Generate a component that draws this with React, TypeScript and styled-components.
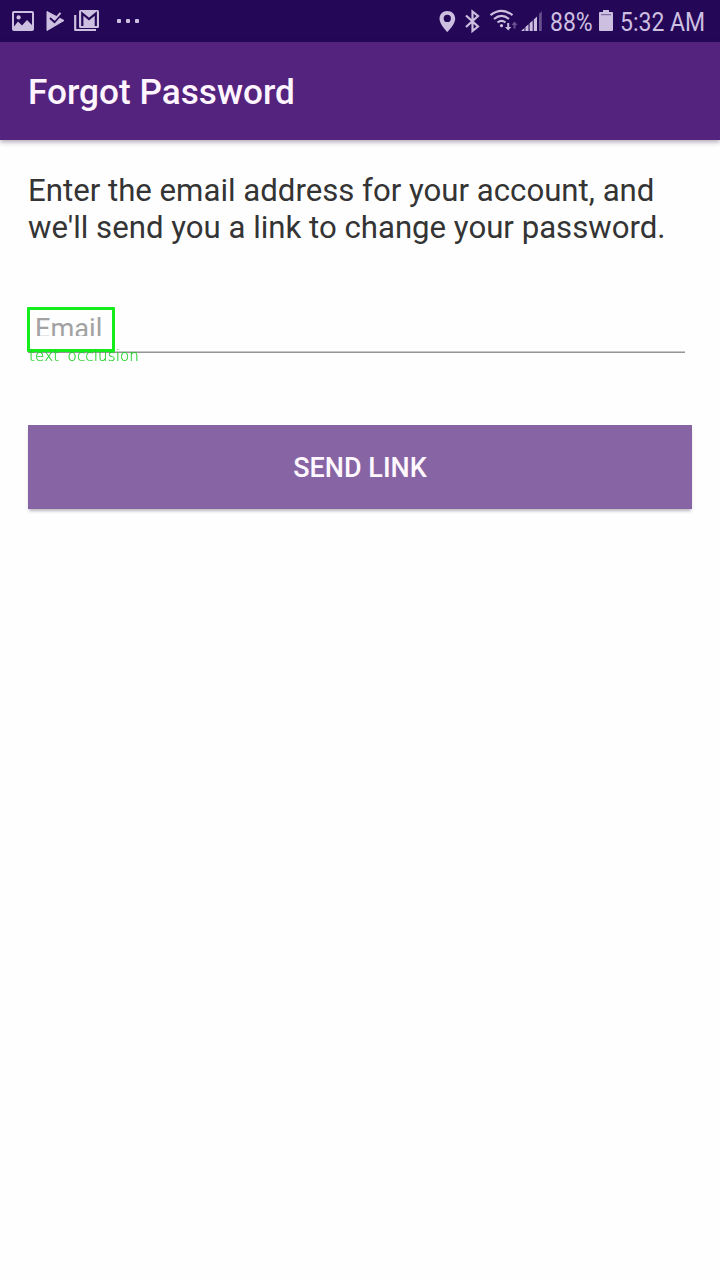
import React from 'react';
import styled, { createGlobalStyle } from 'styled-components';

const GlobalStyle = createGlobalStyle`
  * { box-sizing: border-box; }
  body { margin: 0; background: #fefefe; font-family: Roboto, sans-serif; }
`;

const Screen = styled.div`
  width: 720px;
  height: 1280px;
  overflow: hidden;
  background: #fefefe;
`;

const StatusBar = styled.header`
  display: flex;
  justify-content: space-between;
  height: 42px;
  background: #250758;
  color: #cdbfe0;
`;

const StatusIcon = styled.svg`
  display: block;
  flex: none;
`;

const StatusText = styled.div<{ $width: number }>`
  width: ${(p) => p.$width}px;
  height: 42px;
  line-height: 44px;
  font-size: 26px;
  white-space: nowrap;

  span {
    display: inline-block;
    transform: scaleX(0.885);
    transform-origin: left center;
  }
`;

const StatusGroup = styled.div`
  display: flex;
`;

const AppBar = styled.div`
  position: relative;
  display: flex;
  align-items: center;
  height: 98px;
  padding: 2px 28px 0;
  background: #53237e;
  box-shadow: 0 2px 5px rgba(50, 30, 70, 0.4);
`;

const Title = styled.h1`
  margin: 0;
  color: #fff5ff;
  font-size: 35.2px;
  font-weight: 500;
  line-height: 42px;
  white-space: nowrap;
`;

const Form = styled.main`
  padding: 32px 28px 0;
`;

const Message = styled.p`
  margin: 0;
  color: #343434;
  font-size: 31.18px;
  line-height: 37px;
  white-space: nowrap;
`;

const Field = styled.div`
  position: relative;
  height: 108px;
  margin: 61px 0 10px;
`;

const Placeholder = styled.div`
  height: 29px;
  padding-left: 7px;
  overflow: hidden;
  color: #a2a2a2;
  font-size: 27.2px;
  line-height: 44px;
`;

const Underline = styled.div`
  height: 2px;
  margin: 15px 7px 0 0;
  border-top: 1px solid #c9c6c9;
  background: #979397;
`;

const Marker = styled.div`
  position: absolute;
  top: 0;
  left: -1px;
  width: 88px;
  height: 45px;
  border: 3px solid #15ec1c;
  border-radius: 1px;
`;

const MarkerLabel = styled.div`
  position: absolute;
  top: 40px;
  left: 1px;
  color: #1fd026;
  font-family: 'DejaVu Sans', sans-serif;
  font-size: 15px;
  font-weight: 200;
  letter-spacing: 0.15px;
  line-height: 18px;
  opacity: 0.99;
  white-space: nowrap;
  word-spacing: 3.5px;
  will-change: transform;
  -webkit-text-stroke: 0.2px #1fd026;
`;

const SendButton = styled.button`
  display: block;
  width: 664px;
  height: 84px;
  padding: 2px 0 0;
  border: 0;
  background: #8765a5;
  box-shadow: 0 3px 3px -1px rgba(60, 50, 70, 0.35);
  color: #fff8ff;
  font-family: Roboto, sans-serif;
  font-size: 27px;
  font-weight: 500;
`;

export default function App() {
  return (
    <Screen>
      <GlobalStyle />
      <StatusBar>
        <StatusIcon width="150" height="42" viewBox="0 0 150 42" fill="currentColor">
          <path fillRule="evenodd" d="M14 11H32Q34 11 34 13V29Q34 31 32 31H14Q12 31 12 29V13Q12 11 14 11ZM14 13V26.5L18 21.5L22 25.5L27 20L32 25V13Z" />
          <circle cx="18.6" cy="17.4" r="2.1" />
          <path d="M47 11.5L64 20.5L47 30.5Z" stroke="currentColor" strokeLinejoin="round" />
          <path d="M50 18L54.5 22L62.5 13" fill="none" stroke="#250758" strokeWidth="2" />
          <path d="M51.5 16.5L54.8 19.3L60.5 12.8" fill="none" stroke="currentColor" strokeWidth="2" />
          <path d="M75.2 15V30H96" fill="none" stroke="currentColor" strokeWidth="2.2" strokeLinejoin="round" />
          <rect x="79" y="10" width="20" height="18" rx="1.5" />
          <path d="M82.3 26V13.5L89 19L95.8 13.5V26" fill="none" stroke="#250758" strokeWidth="2.2" />
          <rect x="117" y="19" width="4" height="4" rx="1" />
          <rect x="126" y="19" width="4" height="4" rx="1" />
          <rect x="135" y="19" width="4" height="4" rx="1" />
        </StatusIcon>
        <StatusGroup>
          <StatusIcon width="111" height="42" viewBox="439 0 111 42" fill="currentColor">
            <path fillRule="evenodd" d="M447.3 11C442.7 11 439.5 14.4 439.5 18.7C439.5 24.5 447.3 32 447.3 32S455.2 24.5 455.2 18.7C455.2 14.4 452 11 447.3 11ZM447.3 14.8A3.6 3.6 0 1 1 447.3 22A3.6 3.6 0 1 1 447.3 14.8Z" />
            <path d="M466 15.5L478 26.5L472.5 31V11.5L478 16L466 27" fill="none" stroke="currentColor" strokeWidth="2.2" />
            <g fill="none" stroke="currentColor" strokeWidth="2.2">
              <path d="M490.5 15.2Q501.5 6.5 512.5 15.2" />
              <path d="M494 19Q501.5 12.8 509 19" />
              <path d="M497.5 22.5Q501.5 19.3 505.5 22.5" />
            </g>
            <circle cx="501.5" cy="25.7" r="1.6" />
            <path d="M507.2 23H509.2V27H511.3L508.2 30.5L505 27H507.2Z" />
            <path d="M513.5 28.5V25H511.5L514.5 21.5L517.5 25H515.5V28.5Z" opacity=".4" />
            <path d="M521 31L524.5 28V31ZM525.4 27L528.5 24.3V31H525.4ZM529.6 23.3L532.7 20.5V31H529.6ZM533.8 19.5L537 16.5V31H533.8Z" />
            <path d="M539 14L541.8 11V31H539Z" opacity=".4" />
          </StatusIcon>
          <StatusText $width={47}><span>88%</span></StatusText>
          <StatusIcon width="23" height="42" viewBox="597 0 23 42" fill="currentColor">
            <path d="M603 10H609V12H612Q613 12 613 13V30Q613 31 612 31H600Q599 31 599 30V13Q599 12 600 12H603Z" />
            <path d="M601 14.7H611" stroke="#250758" strokeWidth=".8" opacity=".7" />
          </StatusIcon>
          <StatusText $width={100}><span>5:32 AM</span></StatusText>
        </StatusGroup>
      </StatusBar>
      <AppBar>
        <Title>Forgot Password</Title>
      </AppBar>
      <Form>
        <Message>
          Enter the email address for your account, and
          <br />
          we'll send you a link to change your password.
        </Message>
        <Field>
          <Placeholder>Email</Placeholder>
          <Underline />
          <Marker />
          <MarkerLabel>text occlusion</MarkerLabel>
        </Field>
        <SendButton type="button">SEND LINK</SendButton>
      </Form>
    </Screen>
  );
}
